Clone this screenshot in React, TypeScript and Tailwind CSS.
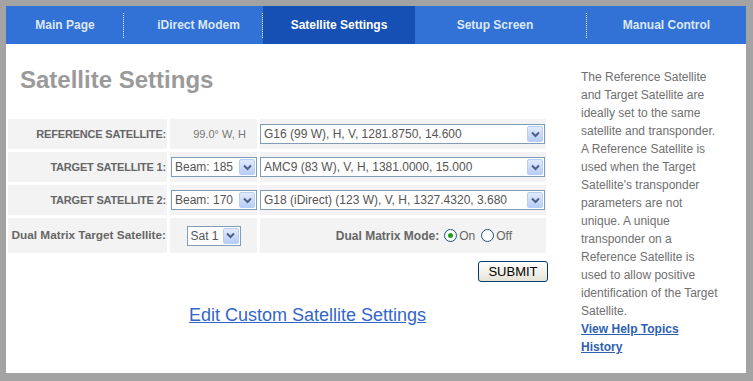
import React from 'react';

const tabs = [
  { label: 'Main Page', width: 'w-[118px]' },
  { label: 'iDirect Modem', width: 'w-[139px] pl-[10px]' },
  { label: 'Satellite Settings', width: 'w-[152px]', active: true },
  { label: 'Setup Screen', width: 'w-[172px] pr-[12px]' },
  { label: 'Manual Control', width: 'flex-1' },
];

const helpText =
  "The Reference Satellite and Target Satellite are ideally set to the same satellite and transponder. A Reference Satellite is used when the Target Satellite's transponder parameters are not unique. A unique transponder on a Reference Satellite is used to allow positive identification of the Target Satellite.";

const Chevron = () => (
  <span className="w-[16px] h-[16px] shrink-0 rounded-[2px] border border-[#b8cdf5] bg-gradient-to-b from-[#e2ebfd] to-[#b7cdf7] flex items-center justify-center">
    <svg width="9" height="7" viewBox="0 0 9 7">
      <path d="M1 1.5 L4.5 5 L8 1.5" fill="none" stroke="#4d6185" strokeWidth="2" />
    </svg>
  </span>
);

const FakeSelect: React.FC<{ value: string; className?: string }> = ({ value, className }) => (
  <div
    className={`h-[20px] border border-[#7f9db9] bg-white flex items-center pl-[3px] pr-[1px] text-[12px] text-[#555] ${className ?? ''}`}
  >
    <span className="flex-1 truncate">{value}</span>
    <Chevron />
  </div>
);

const Label: React.FC<{ children: React.ReactNode }> = ({ children }) => (
  <div className="bg-[#f3f3f3] flex items-center justify-end pr-[1px] whitespace-nowrap text-[11px] font-bold tracking-[-0.2px] text-[#666]">
    {children}
  </div>
);

const Radio: React.FC<{ checked?: boolean }> = ({ checked }) => (
  <span className="w-[13px] h-[13px] rounded-full border border-[#1c5180] bg-white flex items-center justify-center">
    {checked && <span className="w-[5px] h-[5px] rounded-full bg-[#21a121]" />}
  </span>
);

export default function App() {
  return (
    <div
      className="w-[753px] h-[381px] bg-[#a3a3a3] pt-[6px] pl-[6px]"
      style={{ fontFamily: '"Liberation Sans", Arial, sans-serif' }}
    >
      <div className="w-[740px] h-[367px] bg-white flex flex-col">
        {/* Nav */}
        <div className="h-[38px] bg-[#3272d6] flex">
          {tabs.map((t, i) => (
            <div key={t.label} className={`relative flex items-center justify-center ${t.width} ${t.active ? 'bg-[#1650b4] text-white' : 'text-[#dce7f8]'}`}>
              <span className="text-[12px] font-bold">{t.label}</span>
              {i < tabs.length - 1 && !t.active && (
                <span className="absolute right-0 top-[7px] h-[25px] border-r border-dotted border-[#e8eefa]" />
              )}
            </div>
          ))}
        </div>

        <div className="flex flex-1">
          {/* Main */}
          <div className="w-[565px] flex flex-col">
            <h1 className="mt-[22px] ml-[14px] text-[24px] leading-[28px] font-bold text-[#9a9a9a]">
              Satellite Settings
            </h1>

            <div className="mt-[25px] ml-[2px] grid grid-cols-[159px_87px_286px] grid-rows-[30px_30px_30px_35px] gap-[3px]">
              <Label>REFERENCE SATELLITE:</Label>
              <div className="bg-[#f3f3f3] flex items-center justify-center pl-[12px] text-[11px] text-[#777]">
                99.0° W, H
              </div>
              <div className="bg-[#f3f3f3] flex items-center">
                <FakeSelect value="G16 (99 W), H, V, 1281.8750, 14.600" className="w-[285px]" />
              </div>

              <Label>TARGET SATELLITE 1:</Label>
              <div className="bg-[#f3f3f3] flex items-center pl-[1px]">
                <FakeSelect value="Beam: 185" className="w-[86px]" />
              </div>
              <div className="bg-[#f3f3f3] flex items-center">
                <FakeSelect value="AMC9 (83 W), V, H, 1381.0000, 15.000" className="w-[285px]" />
              </div>

              <Label>TARGET SATELLITE 2:</Label>
              <div className="bg-[#f3f3f3] flex items-center pl-[1px]">
                <FakeSelect value="Beam: 170" className="w-[86px]" />
              </div>
              <div className="bg-[#f3f3f3] flex items-center">
                <FakeSelect value="G18 (iDirect) (123 W), V, H, 1327.4320, 3.680" className="w-[285px]" />
              </div>

              <div className="bg-[#f3f3f3] flex items-center justify-end pr-[1px] whitespace-nowrap text-[11.8px] font-bold text-[#666]">
                Dual Matrix Target Satellite:
              </div>
              <div className="bg-[#f3f3f3] flex items-center justify-center">
                <FakeSelect value="Sat 1" className="w-[54px]" />
              </div>
              <div className="bg-[#f3f3f3] flex items-center justify-end pr-[34px] text-[12px] text-[#666]">
                <span className="font-bold mr-[5px]">Dual Matrix Mode:</span>
                <Radio checked />
                <span className="ml-[2px] mr-[6px]">On</span>
                <Radio />
                <span className="ml-[2px]">Off</span>
              </div>
            </div>

            <div className="flex justify-end w-[542px] mt-[8px]">
              <button className="w-[70px] h-[21px] border border-[#003c74] rounded-[3px] bg-gradient-to-b from-white to-[#e6e3d6] text-[13px] text-black leading-none">
                SUBMIT
              </button>
            </div>

            <a href="#" className="mt-[22px] ml-[183px] text-[18px] leading-[22px] text-[#3366cc] underline">
              Edit Custom Satellite Settings
            </a>
          </div>

          {/* Sidebar */}
          <div className="pl-[10px] pt-[24px]">
            <p className="w-[141px] text-[12px] leading-[18px] text-[#707070]">{helpText}</p>
            <a href="#" className="block text-[12px] leading-[18px] font-bold text-[#2e5fb3] underline">
              View Help Topics
            </a>
            <a href="#" className="block text-[12px] leading-[18px] font-bold text-[#2e5fb3] underline">
              History
            </a>
          </div>
        </div>
      </div>
    </div>
  );
}
